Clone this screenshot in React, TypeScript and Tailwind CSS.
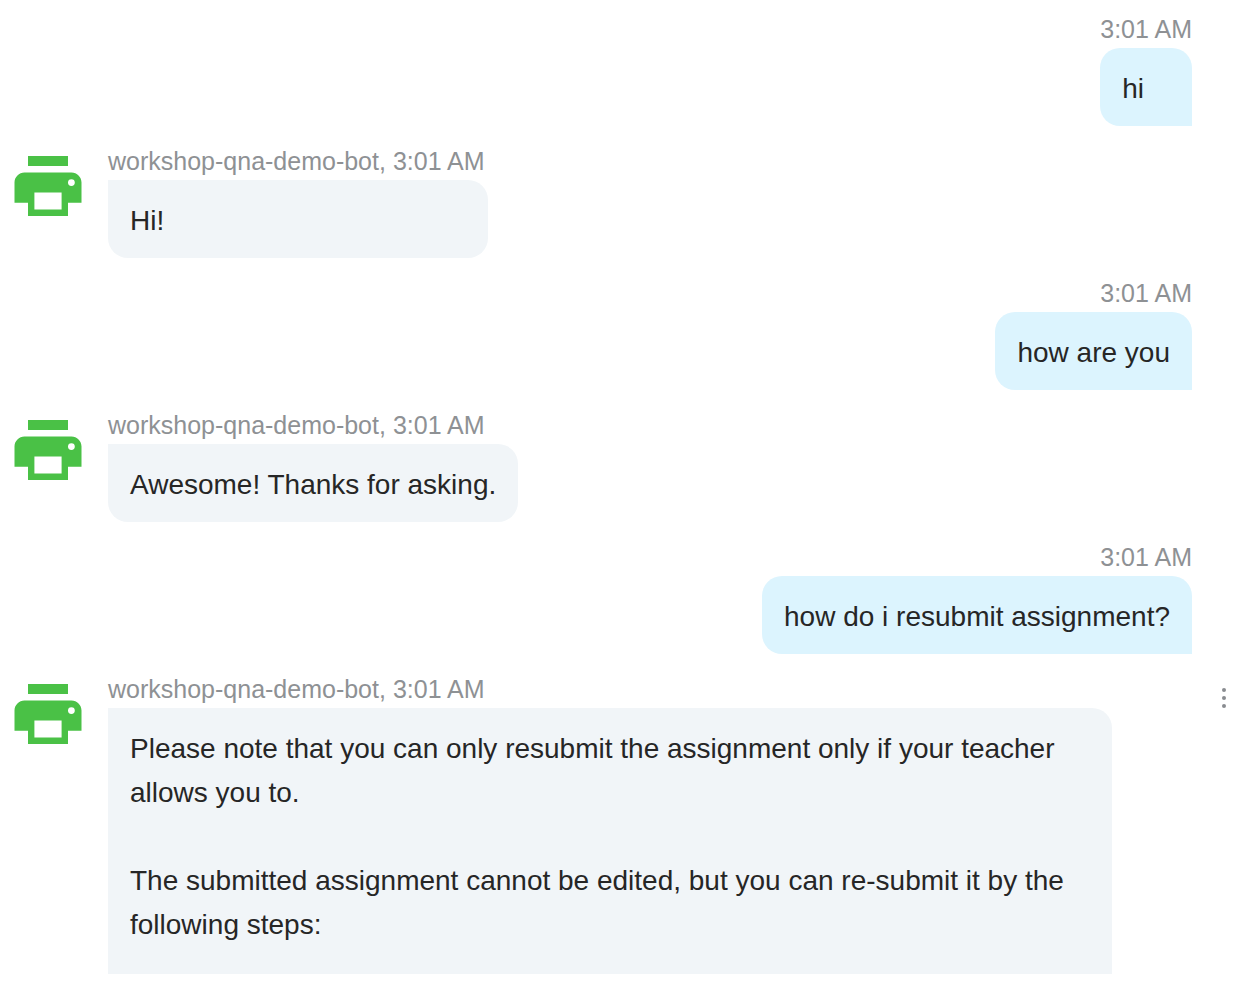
import React from "react";

type Message = {
  from: "bot" | "user";
  time: string;
  text: string[];
};

const BOT_NAME = "workshop-qna-demo-bot";

const messages: Message[] = [
  { from: "user", time: "3:01 AM", text: ["hi"] },
  { from: "bot", time: "3:01 AM", text: ["Hi!"] },
  { from: "user", time: "3:01 AM", text: ["how are you"] },
  { from: "bot", time: "3:01 AM", text: ["Awesome! Thanks for asking."] },
  { from: "user", time: "3:01 AM", text: ["how do i resubmit assignment?"] },
];

const answer: Message = {
  from: "bot",
  time: "3:01 AM",
  text: [
    "Please note that you can only resubmit the assignment only if your teacher allows you to.",
    "The submitted assignment cannot be edited, but you can re-submit it by the following steps:",
  ],
};

function BotAvatar() {
  return (
    <svg viewBox="0 0 68 60" className="mt-3 h-[60px] w-[68px] shrink-0" aria-hidden="true">
      <path fill="#4ac146" d="M14 0H54V10H14Z" />
      <path
        fill="#4ac146"
        fillRule="evenodd"
        d="M10.500 16.500H57.500C63 16.500 67.500 21 67.500 26.500V46.700H54V60H14V46.700H0.500V26.500C0.500 21 5 16.500 10.500 16.500ZM20.400 36.500V53.400H47.600V36.500ZM57.400 23.200A3.400 3.400 0 1 0 57.400 30A3.400 3.400 0 1 0 57.400 23.200Z"
      />
    </svg>
  );
}

function UserMessage({ message }: { message: Message }) {
  return (
    <div className="flex justify-end">
      <div className="min-w-0">
        <p className="pb-0.5 text-right text-[25px] leading-[34px] text-[#8e9194]">{message.time}</p>
        <div className="rounded-[20px] rounded-br-none bg-[#dcf4fe] px-[22px] pt-[19px] pb-[15px]">
          <p className="text-[28px] leading-[44px]">{message.text[0]}</p>
        </div>
      </div>
    </div>
  );
}

function BotMessage({ message, open }: { message: Message; open?: boolean }) {
  return (
    <div className="flex items-start gap-[26px]">
      <BotAvatar />
      <div className={open ? "min-w-0 grow pr-20" : "min-w-[380px]"}>
        <p className="pb-0.5 text-[25px] leading-[34px] text-[#8e9194]">
          {BOT_NAME}, {message.time}
        </p>
        <div
          className={
            open
              ? "rounded-tr-[20px] bg-[#f1f5f8] px-[22px] pt-[19px] pb-[27px]"
              : "rounded-[20px] rounded-tl-none bg-[#f1f5f8] px-[22px] pt-[19px] pb-[15px]"
          }
        >
          {message.text.map((paragraph) => (
            <p key={paragraph} className="mb-11 text-[28px] leading-[44px] last:mb-0">
              {paragraph}
            </p>
          ))}
        </div>
      </div>
    </div>
  );
}

function App() {
  return (
    <main className="bg-white pt-3 font-['Liberation_Sans',Arial,sans-serif] text-[#262626]">
      <div className="flex items-end">
        <div className="flex min-w-0 grow flex-col gap-[18px] pl-[14px]">
          {messages.map((message, index) =>
            message.from === "user" ? (
              <UserMessage key={index} message={message} />
            ) : (
              <BotMessage key={index} message={message} />
            )
          )}
          <BotMessage message={answer} open />
        </div>

        {/* Message menu */}
        <div className="flex h-[302px] w-[54px] shrink-0 justify-end pr-3">
          <button
            type="button"
            aria-label="Message options"
            className="flex h-[52px] w-5 cursor-pointer items-center justify-center"
          >
            <svg viewBox="0 0 4 20" className="h-5 w-1" fill="#898c90">
              <circle cx="2" cy="2" r="2" />
              <circle cx="2" cy="10" r="2" />
              <circle cx="2" cy="18" r="2" />
            </svg>
          </button>
        </div>
      </div>
    </main>
  );
}

export default App;
